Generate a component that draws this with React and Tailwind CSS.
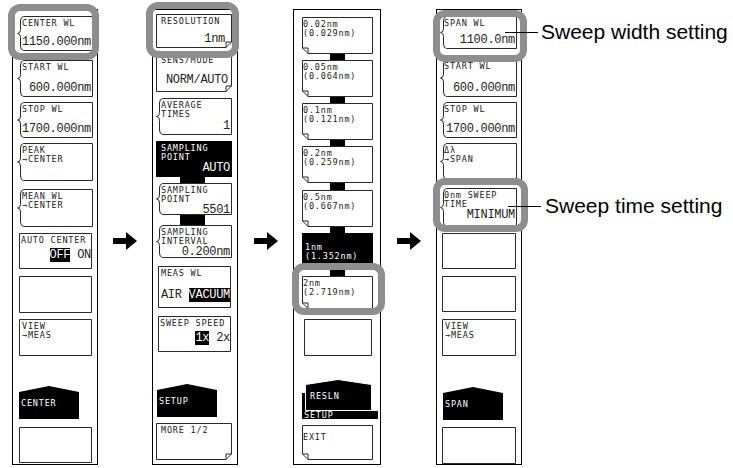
import React from "react";

const LBL = "font-['DejaVu_Sans_Mono',monospace] text-[8.5px] leading-[9px] tracking-[0.8px] whitespace-pre";
const VAL = "font-['Liberation_Mono',monospace] text-[12px] leading-[13px] tracking-[-0.3px] whitespace-pre";
const STROKE = "#2a2a2a";

function Outline({ kind, w, h }) {
  if (kind === "black") {
    return (
      <svg className="absolute left-0 top-0" width={w} height={h}>
        <rect x="0" y="0" width={w} height={h} fill="black" />
      </svg>
    );
  }
  let d;
  let fold = null;
  if (kind === "brace") {
    const m = h / 2;
    d = `M6.5 0.5 H${w - 0.5} V${h - 0.5} H6.5 Q3.5 ${h - 1} 3.5 ${h - 5} L3.5 ${m + 4} Q3.5 ${m} 0.5 ${m} Q3.5 ${m} 3.5 ${m - 4} L3.5 5 Q3.5 1 6.5 0.5 Z`;
  } else if (kind === "foldR") {
    d = `M0.5 0.5 H${w - 0.5} V${h - 6} L${w - 6} ${h - 0.5} H0.5 Z`;
    fold = `M${w - 6} ${h - 0.5} V${h - 6} H${w - 0.5}`;
  } else if (kind === "foldL") {
    d = `M0.5 0.5 H${w - 0.5} V${h - 0.5} H6 L0.5 ${h - 6} Z`;
    fold = `M0.5 ${h - 6} H6 V${h - 0.5}`;
  } else {
    d = `M2.5 0.5 H${w - 1.5} V${h - 0.5} H2.5 Z`;
  }
  return (
    <svg className="absolute left-0 top-0 overflow-visible" width={w} height={h}>
      <path d={d} fill="white" stroke={STROKE} strokeWidth="1" />
      {fold && <path d={fold} fill="none" stroke={STROKE} strokeWidth="1" />}
    </svg>
  );
}

function Key({ cls, w, h, kind = "plain", hl, pad = "pl-[5px]", children }) {
  const dark = kind === "black";
  return (
    <div className={`relative shrink-0 ${cls}`}>
      <Outline kind={kind} w={w} h={h} />
      <div className={`relative flex h-full flex-col pb-[2px] pr-[2px] pt-[3px] ${pad} ${dark ? "text-white" : "text-[#222]"}`}>
        {children}
      </div>
      {hl && <div className={`pointer-events-none absolute z-10 rounded-[12px] border-[7px] border-[#8e8e8e] ${hl}`} />}
    </div>
  );
}

function Lbl({ children }) {
  return <div className={LBL}>{children}</div>;
}

function Val({ children }) {
  return <div className={`${VAL} mt-auto self-end`}>{children}</div>;
}

function Inv({ children }) {
  return <span className="bg-black text-white">{children}</span>;
}

function Tab({ cls, label }) {
  return (
    <div className={`relative h-[33px] w-[60px] shrink-0 ${cls}`}>
      <svg className="absolute left-0 top-0" width="60" height="33">
        <path d="M0 6 L30 0 L60 6 V33 H0 Z" fill="black" />
      </svg>
      <div className={`relative pl-[2px] pt-[13px] text-white ${LBL}`}>{label}</div>
    </div>
  );
}

function Col({ cls, children }) {
  return (
    <div className={`mt-[9px] flex h-[456px] shrink-0 flex-col border border-black ${cls}`}>
      {children}
    </div>
  );
}

function Arrow({ slot }) {
  return (
    <div className={`flex shrink-0 justify-center pt-[232px] ${slot}`}>
      <svg width="24" height="18">
        <path d="M0 6 H13 V0 L24 9 L13 18 V12 H0 Z" fill="black" />
      </svg>
    </div>
  );
}

function Col1() {
  const w = 76;
  return (
    <Col cls="w-[86px] pl-[4px]">
      <Key cls="mt-[6px] h-[35px] w-[76px]" w={w} h={35} kind="brace" hl="-left-[9px] -right-[6px] -top-[12px] -bottom-[9px]">
        <Lbl>CENTER WL</Lbl>
        <Val>1150.000nm</Val>
      </Key>
      <Key cls="mt-[9px] h-[37px] w-[76px]" w={w} h={37} kind="brace">
        <Lbl>START WL</Lbl>
        <Val>600.000nm</Val>
      </Key>
      <Key cls="mt-[5px] h-[36px] w-[76px]" w={w} h={36} kind="brace">
        <Lbl>STOP WL</Lbl>
        <Val>1700.000nm</Val>
      </Key>
      <Key cls="mt-[5px] h-[38px] w-[76px]" w={w} h={38} kind="brace">
        <Lbl>PEAK</Lbl>
        <Lbl>→CENTER</Lbl>
      </Key>
      <Key cls="mt-[8px] h-[38px] w-[76px]" w={w} h={38} kind="brace">
        <Lbl>MEAN WL</Lbl>
        <Lbl>→CENTER</Lbl>
      </Key>
      <Key cls="mt-[6px] h-[36px] w-[76px]" w={w} h={36} pad="pl-[4px]">
        <Lbl>AUTO CENTER</Lbl>
        <div className={`${VAL} mt-auto mb-[5px] self-end`}>
          <Inv>OFF</Inv> ON
        </div>
      </Key>
      <Key cls="mt-[7px] h-[37px] w-[76px]" w={w} h={37} />
      <Key cls="mt-[6px] h-[37px] w-[76px]" w={w} h={37}>
        <Lbl>VIEW</Lbl>
        <Lbl>→MEAS</Lbl>
      </Key>
      <Tab cls="mt-[30px] ml-[2px]" label="CENTER" />
      <Key cls="mt-[8px] h-[36px] w-[76px]" w={w} h={36} />
    </Col>
  );
}

function Col2() {
  const w = 76;
  return (
    <Col cls="w-[86px] pl-[3px]">
      <Key cls="mt-[4px] h-[34px] w-[76px]" w={w} h={34} kind="foldR" hl="-left-[10px] -right-[7px] -top-[12px] -bottom-[10px]">
        <Lbl>RESOLUTION</Lbl>
        <div className={`${VAL} mt-auto self-end pr-[5px]`}>1nm</div>
      </Key>
      <Key cls="mt-[5px] h-[39px] w-[76px]" w={w} h={39} kind="foldR">
        <Lbl>SENS/MODE</Lbl>
        <div className={`${VAL} mt-auto mb-[3px] self-end pr-[2px]`}>NORM/AUTO</div>
      </Key>
      <Key cls="mt-[6px] h-[37px] w-[76px]" w={w} h={37} kind="brace">
        <Lbl>AVERAGE</Lbl>
        <Lbl>TIMES</Lbl>
        <Val>1</Val>
      </Key>
      <Key cls="mt-[6px] h-[36px] w-[76px]" w={w} h={36} kind="black">
        <Lbl>SAMPLING</Lbl>
        <Lbl>POINT</Lbl>
        <Val>AUTO</Val>
      </Key>
      <div className="ml-[24px] h-[6px] w-[25px] shrink-0 bg-black" />
      <Key cls="h-[32px] w-[76px]" w={w} h={32} kind="brace">
        <Lbl>SAMPLING</Lbl>
        <Lbl>POINT</Lbl>
        <Val>5501</Val>
      </Key>
      <div className="ml-[24px] h-[10px] w-[25px] shrink-0 bg-black" />
      <Key cls="h-[33px] w-[76px]" w={w} h={33} kind="brace">
        <Lbl>SAMPLING</Lbl>
        <Lbl>INTERVAL</Lbl>
        <Val>0.200nm</Val>
      </Key>
      <Key cls="mt-[8px] h-[42px] w-[76px]" w={w} h={42}>
        <Lbl>MEAS WL</Lbl>
        <div className={`${VAL} mt-auto mb-[4px] self-end`}>
          AIR <Inv>VACUUM</Inv>
        </div>
      </Key>
      <Key cls="mt-[8px] h-[36px] w-[76px]" w={w} h={36} pad="pl-[4px]">
        <Lbl>SWEEP SPEED</Lbl>
        <div className={`${VAL} mt-auto mb-[5px] self-end`}>
          <Inv>1x</Inv> 2x
        </div>
      </Key>
      <Tab cls="mt-[32px] ml-[1px]" label="SETUP" />
      <Key cls="mt-[6px] h-[37px] w-[76px]" w={w} h={37} kind="foldR">
        <Lbl>MORE 1/2</Lbl>
      </Key>
    </Col>
  );
}

function Conn3({ cls }) {
  return <div className={`ml-[28px] w-[15px] shrink-0 bg-black ${cls}`} />;
}

function Col3() {
  const w = 71;
  return (
    <Col cls="w-[88px] pl-[8px]">
      <Key cls="mt-[7px] h-[37px] w-[71px]" w={w} h={37} kind="foldL" pad="pl-[1px]">
        <Lbl>0.02nm</Lbl>
        <Lbl>(0.029nm)</Lbl>
      </Key>
      <Conn3 cls="h-[6px]" />
      <Key cls="h-[37px] w-[71px]" w={w} h={37} kind="foldL" pad="pl-[1px]">
        <Lbl>0.05nm</Lbl>
        <Lbl>(0.064nm)</Lbl>
      </Key>
      <Conn3 cls="h-[6px]" />
      <Key cls="h-[37px] w-[71px]" w={w} h={37} kind="foldL" pad="pl-[1px]">
        <Lbl>0.1nm</Lbl>
        <Lbl>(0.121nm)</Lbl>
      </Key>
      <Conn3 cls="h-[6px]" />
      <Key cls="h-[37px] w-[71px]" w={w} h={37} kind="foldL" pad="pl-[1px]">
        <Lbl>0.2nm</Lbl>
        <Lbl>(0.259nm)</Lbl>
      </Key>
      <Conn3 cls="h-[7px]" />
      <Key cls="h-[37px] w-[71px]" w={w} h={37} kind="foldL" pad="pl-[1px]">
        <Lbl>0.5nm</Lbl>
        <Lbl>(0.667nm)</Lbl>
      </Key>
      <Conn3 cls="h-[6px]" />
      <Key cls="h-[37px] w-[71px]" w={w} h={37} kind="black" pad="pl-[3px] pt-[10px]">
        <Lbl>1nm</Lbl>
        <Lbl>(1.352nm)</Lbl>
      </Key>
      <Conn3 cls="h-[6px]" />
      <Key cls="h-[33px] w-[71px]" w={w} h={33} kind="foldL" pad="pl-[1px]" hl="-left-[10px] -right-[12px] -top-[13px] -bottom-[6px]">
        <Lbl>2nm</Lbl>
        <Lbl>(2.719nm)</Lbl>
      </Key>
      <Key cls="mt-[10px] h-[37px] w-[71px]" w={w} h={37} />
      <div className="relative mt-[23px] h-[40px] w-[78px] shrink-0 -ml-[1px]">
        <svg className="absolute left-0 top-0" width="78" height="40">
          <path d="M1 14 H6 V32 H77 V40 H1 Z" fill="black" />
          <path d="M4.5 5.5 L37 0.5 L70.5 5.5 V31.5 H4.5 Z" fill="black" stroke="white" strokeWidth="1" />
        </svg>
        <div className={`absolute left-[9px] top-[13px] text-white ${LBL}`}>RESLN</div>
        <div className={`absolute left-[3px] top-[32px] text-white ${LBL}`}>SETUP</div>
      </div>
      <Key cls="mt-[6px] h-[35px] w-[71px]" w={w} h={35} kind="foldL" pad="pl-[1px] pt-[8px]">
        <Lbl>EXIT</Lbl>
      </Key>
    </Col>
  );
}

function Col4() {
  const w = 77;
  return (
    <Col cls="w-[86px] pl-[3px]">
      <Key cls="mt-[6px] h-[33px] w-[77px]" w={w} h={33} kind="brace" pad="pl-[4px]" hl="-left-[7px] -right-[10px] -top-[6px] -bottom-[13px]">
        <Lbl>SPAN WL</Lbl>
        <Val>1100.0nm</Val>
      </Key>
      <Key cls="mt-[10px] h-[38px] w-[77px]" w={w} h={38} kind="brace" pad="pl-[4px]">
        <Lbl>START WL</Lbl>
        <Val>600.000nm</Val>
      </Key>
      <Key cls="mt-[5px] h-[36px] w-[77px]" w={w} h={36} kind="brace" pad="pl-[4px]">
        <Lbl>STOP WL</Lbl>
        <Val>1700.000nm</Val>
      </Key>
      <Key cls="mt-[5px] h-[37px] w-[77px]" w={w} h={37} kind="brace" pad="pl-[4px]">
        <Lbl>Δλ</Lbl>
        <Lbl>→SPAN</Lbl>
      </Key>
      <Key cls="mt-[8px] h-[39px] w-[77px]" w={w} h={39} kind="brace" pad="pl-[4px]" hl="-left-[7px] -right-[11px] -top-[10px] -bottom-[5px]">
        <Lbl>0nm SWEEP</Lbl>
        <Lbl>TIME</Lbl>
        <div className={`${VAL} self-end`}>MINIMUM</div>
      </Key>
      <Key cls="mt-[6px] h-[36px] w-[77px]" w={w} h={36} />
      <Key cls="mt-[7px] h-[36px] w-[77px]" w={w} h={36} />
      <Key cls="mt-[7px] h-[37px] w-[77px]" w={w} h={37}>
        <Lbl>VIEW</Lbl>
        <Lbl>→MEAS</Lbl>
      </Key>
      <Tab cls="mt-[31px] ml-[3px]" label="SPAN" />
      <Key cls="mt-[7px] h-[37px] w-[77px]" w={w} h={37} />
    </Col>
  );
}

function Notes() {
  return (
    <div className="relative z-20 flex flex-col font-['Liberation_Sans',Arial,sans-serif] text-[21px] leading-[24px] text-black">
      <div className="mt-[20px] flex items-center">
        <div className="-ml-[17px] h-px w-[33px] bg-black" />
        <span className="ml-[3px] whitespace-nowrap">Sweep width setting</span>
      </div>
      <div className="mt-[150px] flex items-center">
        <div className="-ml-[14px] h-px w-[33px] bg-black" />
        <span className="ml-[4px] whitespace-nowrap">Sweep time setting</span>
      </div>
    </div>
  );
}

export default function App() {
  return (
    <div className="relative flex h-[468px] w-[733px] overflow-hidden bg-white">
      <div className="w-[12px] shrink-0" />
      <Col1 />
      <Arrow slot="w-[54px]" />
      <Col2 />
      <Arrow slot="w-[55px]" />
      <Col3 />
      <Arrow slot="w-[55px]" />
      <Col4 />
      <Notes />
    </div>
  );
}
